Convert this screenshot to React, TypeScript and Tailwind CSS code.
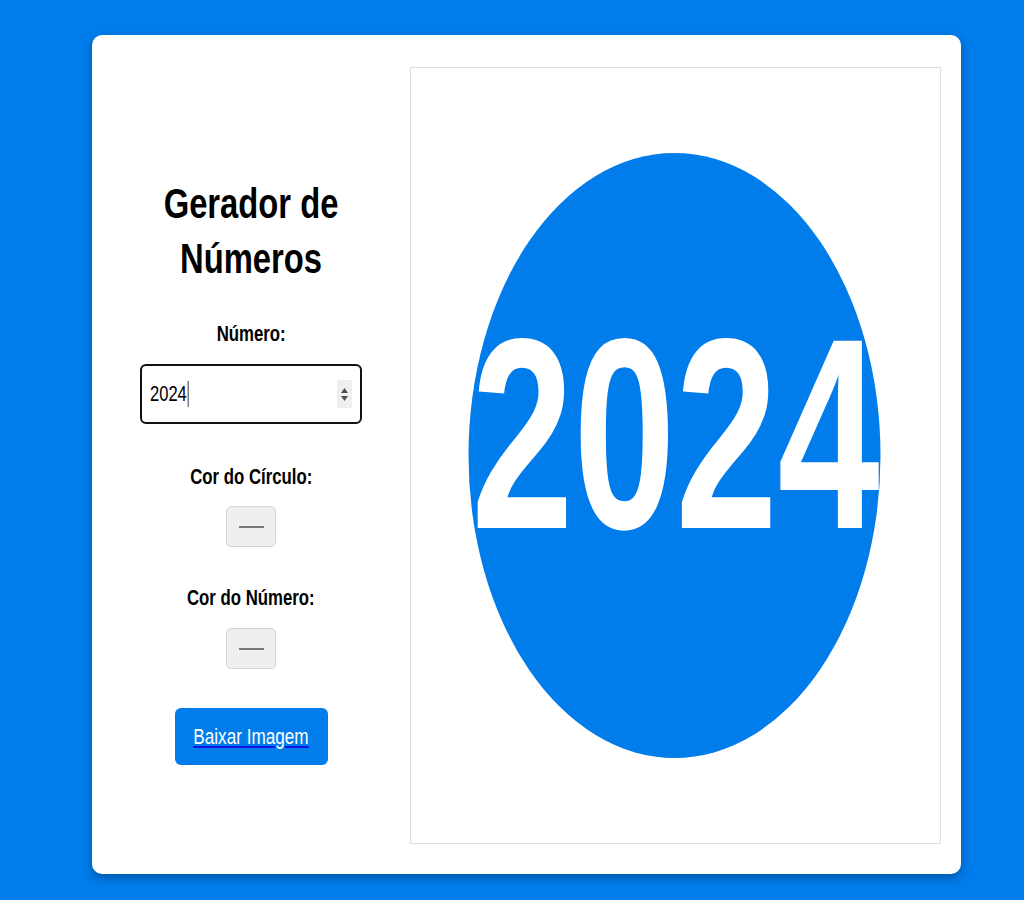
import type { ReactNode } from 'react';

// text in the reference is rendered horizontally condensed
function Narrow({ children, className = '' }: { children: ReactNode; className?: string }) {
  return <span className={`inline-block whitespace-nowrap scale-x-[0.78] ${className}`}>{children}</span>;
}

function Label({ children }: { children: ReactNode }) {
  return (
    <div className="text-[21.5px] leading-[26px] font-bold text-black text-center">
      <Narrow>{children}</Narrow>
    </div>
  );
}

function ColorSwatch() {
  return (
    <button
      type="button"
      className="w-[50px] h-[41px] rounded-[5px] border border-[#d4d4d4] bg-[#efefef] flex items-center justify-center"
    >
      <span className="block w-[25px] h-[2px] bg-[#7a7a7a]" />
    </button>
  );
}

function NumberField() {
  return (
    <div className="w-[222px] h-[60px] rounded-[6px] border-2 border-[#111] bg-white flex items-center pl-[8px] pr-[8px]">
      <span className="inline-block origin-left scale-x-[0.77] text-[21.5px] leading-[26px] text-black border-r border-black pr-[1px]">
        2024
      </span>
      <div className="ml-auto w-[15px] h-[28px] bg-[#efefef] flex flex-col items-center justify-center gap-[3px]">
        <svg width="7" height="5" viewBox="0 0 7 5">
          <path d="M3.5 0 L7 5 L0 5 Z" fill="#505050" />
        </svg>
        <svg width="7" height="5" viewBox="0 0 7 5">
          <path d="M0 0 L7 0 L3.5 5 Z" fill="#505050" />
        </svg>
      </div>
    </div>
  );
}

function Preview() {
  return (
    <div className="w-[531px] h-[777px] border border-[#dedede] bg-white">
      <svg width="529" height="775" viewBox="0 0 529 775" className="block">
        <ellipse cx="263.5" cy="387.5" rx="206" ry="302.5" fill="#017ceb" />
        <text
          transform="translate(264.5 460) scale(0.675 1)"
          textAnchor="middle"
          fontSize="272"
          fontWeight="bold"
          fontFamily="'Liberation Sans', Arial, sans-serif"
          fill="#ffffff"
        >
          2024
        </text>
      </svg>
    </div>
  );
}

export default function App() {
  return (
    <div className="min-h-screen bg-[#017ceb] pt-[35px] pl-[92px] pb-[26px] font-['Liberation_Sans',Arial,sans-serif]">
      <div className="flex w-[869px] rounded-[10px] bg-white pt-[32px] pb-[30px] pr-[20px] shadow-[0_4px_10px_rgba(0,0,0,0.3)]">
        {/* Controls */}
        <div className="w-[318px] flex flex-col items-center pt-[109px]">
          <h1 className="text-[42px] leading-[55px] font-bold text-black text-center">
            <div><Narrow>Gerador de</Narrow></div>
            <div><Narrow>Números</Narrow></div>
          </h1>

          <div className="mt-[35px]">
            <Label>Número:</Label>
          </div>
          <div className="mt-[17px]">
            <NumberField />
          </div>

          <div className="mt-[40px]">
            <Label>Cor do Círculo:</Label>
          </div>
          <div className="mt-[16px]">
            <ColorSwatch />
          </div>

          <div className="mt-[38px]">
            <Label>Cor do Número:</Label>
          </div>
          <div className="mt-[17px]">
            <ColorSwatch />
          </div>

          <a
            href="#"
            className="mt-[39px] w-[153px] h-[57px] rounded-[6px] bg-[#017ceb] flex items-center justify-center text-[22px] leading-[26px] text-white underline decoration-[#1414e6]"
          >
            <Narrow>Baixar Imagem</Narrow>
          </a>
        </div>

        {/* Canvas preview */}
        <Preview />
      </div>
    </div>
  );
}
